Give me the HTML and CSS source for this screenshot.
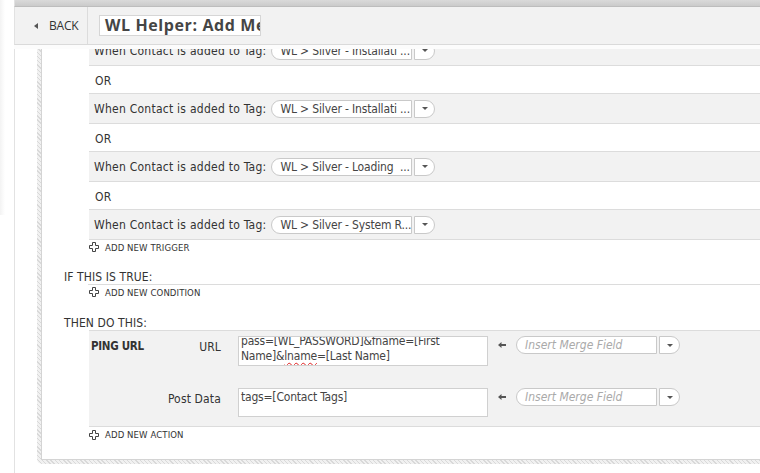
FILE: index.html
```html
<!DOCTYPE html>
<html>
<head>
<meta charset="utf-8">
<title>WL Helper</title>
<link rel="stylesheet" href="styles.css">
</head>
<body>
<div class="page">
  <div class="topbar"></div>
  <header class="header">
    <a class="back"><span class="tri"></span>BACK</a>
    <div class="title">WL Helper: Add Members</div>
  </header>
  <div class="shade"></div>
  <div class="viewport">
    <div class="frame">
      <div class="box">
        <div class="triggers">
          <div class="row gray">
            <span class="cond">When Contact is added to Tag:</span>
            <span class="select"><span class="pill">WL &gt; Silver - Installati ...</span><span class="drop"><span class="caret"></span></span></span>
          </div>
          <div class="row or">OR</div>
          <div class="row gray">
            <span class="cond">When Contact is added to Tag:</span>
            <span class="select"><span class="pill">WL &gt; Silver - Installati ...</span><span class="drop"><span class="caret"></span></span></span>
          </div>
          <div class="row or">OR</div>
          <div class="row gray">
            <span class="cond">When Contact is added to Tag:</span>
            <span class="select"><span class="pill">WL &gt; Silver - Loading&nbsp; ...</span><span class="drop"><span class="caret"></span></span></span>
          </div>
          <div class="row or">OR</div>
          <div class="row gray">
            <span class="cond">When Contact is added to Tag:</span>
            <span class="select"><span class="pill">WL &gt; Silver - System R...</span><span class="drop"><span class="caret"></span></span></span>
          </div>
        </div>
        <a class="add add-trigger"><svg class="plus" width="10" height="10" viewBox="0 0 10 10"><path d="M3.5 0.5h3v3h3v3h-3v3h-3v-3h-3v-3h3z" fill="#fff" stroke="#444" stroke-width="1"/></svg>ADD NEW TRIGGER</a>

        <div class="heading h-if">IF THIS IS TRUE:</div>
        <div class="conditions"></div>
        <a class="add add-cond"><svg class="plus" width="10" height="10" viewBox="0 0 10 10"><path d="M3.5 0.5h3v3h3v3h-3v3h-3v-3h-3v-3h3z" fill="#fff" stroke="#444" stroke-width="1"/></svg>ADD NEW CONDITION</a>

        <div class="heading h-then">THEN DO THIS:</div>
        <div class="action">
          <div class="action-title">PING URL</div>
          <div class="fields">
            <div class="field f-url">
              <label class="label">URL</label>
              <div class="textarea"><div class="ta-text scrolled">pass=[WL_PASSWORD]&amp;fname=[First Name]&amp;<span class="miss">lname</span>=[Last Name]</div></div>
              <svg class="arrow" width="8" height="6" viewBox="0 0 8 6"><path d="M0 3L3.5 0v2h4.5v2H3.5v2z" fill="#555"/></svg>
              <span class="select merge"><span class="pill">Insert Merge Field</span><span class="drop"><span class="caret"></span></span></span>
            </div>
            <div class="field f-post">
              <label class="label">Post Data</label>
              <div class="textarea"><div class="ta-text">tags=[Contact Tags]</div></div>
              <svg class="arrow" width="8" height="6" viewBox="0 0 8 6"><path d="M0 3L3.5 0v2h4.5v2H3.5v2z" fill="#555"/></svg>
              <span class="select merge"><span class="pill">Insert Merge Field</span><span class="drop"><span class="caret"></span></span></span>
            </div>
          </div>
        </div>
        <a class="add add-action"><svg class="plus" width="10" height="10" viewBox="0 0 10 10"><path d="M3.5 0.5h3v3h3v3h-3v3h-3v-3h-3v-3h3z" fill="#fff" stroke="#444" stroke-width="1"/></svg>ADD NEW ACTION</a>
      </div>
    </div>
  </div>
</div>
</body>
</html>
```

FILE: styles.css
```css
* { box-sizing: border-box; }
html, body { margin: 0; padding: 0; overflow: hidden; }
body {
  width: 760px;
  height: 473px;
  background: #fff linear-gradient(to right, #f3f3f3, #fff) no-repeat 0 0 / 5px 215px;
  font-family: "DejaVu Sans Condensed", "DejaVu Sans", sans-serif;
  font-size: 12px;
  color: #333;
}
.page {
  margin-left: 14px;
  height: 473px;
}
.topbar {
  height: 7px;
  background: linear-gradient(#dadada, #cbcbcb);
  border-bottom: 1px solid #bdbdbd;
  border-left: 1px solid #e2e2e2;
}
.header {
  height: 38px;
  background: #f2f2f2;
  border-bottom: 1px solid #dadada;
  border-left: 1px solid #e2e2e2;
  display: flex;
  align-items: center;
}
.shade {
  height: 4px;
  background: #fcfcfc;
}
.back {
  width: 73px;
  height: 100%;
  border-right: 1px solid #dcdcdc;
  display: flex;
  align-items: center;
  padding-left: 19px;
  font-family: "Open Sans", sans-serif;
  font-size: 12px;
  color: #333;
  letter-spacing: -0.2px;
}
.tri {
  width: 0;
  height: 0;
  border-right: 4px solid #555;
  border-top: 3px solid transparent;
  border-bottom: 3px solid transparent;
  margin-right: 11px;
}
.title {
  margin-left: 11px;
  width: 162px;
  height: 21px;
  background: #fff;
  border: 1px solid #d6d6d6;
  overflow: hidden;
  white-space: nowrap;
  padding-left: 5px;
  font-family: "Open Sans", sans-serif;
  font-weight: 700;
  font-size: 16px;
  line-height: 19px;
  letter-spacing: 0.6px;
  color: #454545;
}
.viewport {
  height: 424px;
  overflow: hidden;
  border-left: 1px solid #e2e2e2;
}
.frame {
  margin-left: 22px;
  margin-top: -13px;
  padding: 0 0 4px 4px;
  background: repeating-linear-gradient(45deg, #d9d9d9 0 1px, #f1f1f1 1px 3px);
  border-bottom-left-radius: 5px;
}
.box {
  background: #fff;
  border-left: 1px solid #d4d4d4;
  border-bottom: 1px solid #d4d4d4;
  padding-left: 22px;
  padding-bottom: 18px;
}
.triggers { margin-left: 25px; }
.row {
  display: flex;
  align-items: center;
  border-bottom: 1px solid #dcdcdc;
  white-space: nowrap;
  letter-spacing: 0.25px;
}
.row.gray { height: 30px; background: #f2f2f2; padding-left: 5px; }
.row.or { height: 28px; background: #fff; padding-left: 6px; padding-top: 2px; }
.cond { margin-right: 5px; }
.select { display: inline-flex; align-items: center; }
.pill {
  width: 141px;
  height: 18px;
  background: #fff;
  border: 1px solid #c9c9c9;
  border-radius: 9px 0 0 9px;
  padding-left: 8px;
  line-height: 16px;
  overflow: hidden;
  white-space: nowrap;
  color: #444;
  letter-spacing: -0.15px;
}
.drop {
  width: 21px;
  height: 18px;
  margin-left: 2px;
  background: #fff;
  border: 1px solid #c9c9c9;
  border-radius: 0 9px 9px 0;
  display: flex;
  align-items: center;
  justify-content: center;
}
.caret {
  width: 0;
  height: 0;
  border-top: 3px solid #555;
  border-left: 3px solid transparent;
  border-right: 3px solid transparent;
}
.add {
  display: flex;
  align-items: center;
  margin-left: 25px;
  font-size: 9.5px;
  color: #333;
  letter-spacing: 0.1px;
}
.plus { margin-right: 6px; flex: none; }
.add-trigger { height: 14px; }
.heading {
  height: 14px;
  line-height: 14px;
  color: #333;
  letter-spacing: 0.1px;
}
.h-if { margin-top: 16px; }
.conditions { margin-left: 24px; border-top: 1px solid #dcdcdc; }
.add-cond { height: 14px; }
.h-then { margin-top: 17px; }
.action {
  margin-left: 25px;
  background: #f2f2f2;
  border-top: 1px solid #dcdcdc;
  border-bottom: 1px solid #dcdcdc;
  display: flex;
  padding: 5px 0 9px 2px;
}
.action-title {
  width: 58px;
  font-weight: bold;
  font-size: 11.5px;
  letter-spacing: -0.3px;
  padding-top: 3px;
  line-height: 14px;
  color: #333;
}
.fields { display: flex; flex-direction: column; gap: 22px; }
.field { display: flex; align-items: flex-start; }
.label {
  width: 72px;
  text-align: right;
  padding-top: 4px;
  line-height: 14px;
  margin-right: 17px;
  color: #333;
  letter-spacing: 0.15px;
}
.textarea {
  width: 250px;
  background: #fff;
  border: 1px solid #d0d0d0;
  overflow: hidden;
  padding: 1px 0 0 2px;
  color: #444;
  letter-spacing: -0.2px;
}
.f-url .textarea { height: 30px; }
.f-post .textarea { height: 29px; }
.ta-text { line-height: 15px; }
.ta-text.scrolled { margin-top: -4px; }
.miss {
  text-decoration: underline wavy #e02020;
  text-decoration-thickness: 1px;
  text-underline-offset: 2px;
}
.arrow { margin: 6px 10px 0 10px; flex: none; }
.merge .pill {
  width: 141px;
  font-style: italic;
  color: #aaa;
  padding-left: 8px;
  letter-spacing: 0;
}
.add-action { height: 13px; margin-top: 1px; }
```
